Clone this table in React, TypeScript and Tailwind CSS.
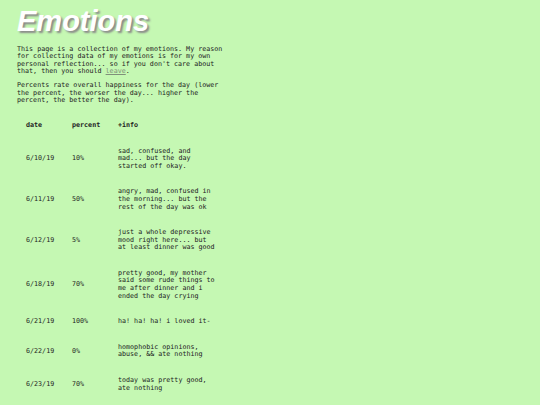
import React from 'react';

const rows = [
  { date: '6/10/19', pct: '10%', info: 'sad, confused, and mad... but the day started off okay.' },
  { date: '6/11/19', pct: '50%', info: 'angry, mad, confused in the morning... but the rest of the day was ok' },
  { date: '6/12/19', pct: '5%', info: 'just a whole depressive mood right here... but at least dinner was good' },
  { date: '6/18/19', pct: '70%', info: 'pretty good, my mother said some rude things to me after dinner and i ended the day crying' },
  { date: '6/21/19', pct: '100%', info: 'ha! ha! ha! i loved it-' },
  { date: '6/22/19', pct: '0%', info: 'homophobic opinions, abuse, && ate nothing' },
  { date: '6/23/19', pct: '70%', info: 'today was pretty good, ate nothing' },
];

const App: React.FC = () => {
  return (
    <div className="min-h-[405px] bg-[#c5f8b3] pl-[17px] pt-[6.5px] text-[#222] font-['DejaVu_Sans_Mono',monospace] text-[6.7px] leading-[7.6px]">
      <h1 className="font-['Liberation_Sans',Arial,sans-serif] text-[29px] leading-[29px] font-bold italic text-white [text-shadow:2px_2px_2px_#8a8a8a]">
        Emotions
      </h1>

      <p className="mt-[10px] w-[210px]">
        This page is a collection of my emotions. My reason for collecting data of my emotions is for my own personal reflection... so if you don't care about that, then you should{' '}
        <a href="#" className="text-[#7f907a] underline">leave</a>.
      </p>
      <p className="mt-[6.3px] w-[210px]">
        Percents rate overall happiness for the day (lower the percent, the worser the day... higher the percent, the better the day).
      </p>

      <div className="mt-[17px] ml-[9px] grid grid-cols-[46px_46px_98px] items-center gap-y-[18px]">
        <div className="font-bold">date</div>
        <div className="font-bold">percent</div>
        <div className="font-bold">+info</div>
        {rows.map((r, i) => (
          <React.Fragment key={i}>
            <div>{r.date}</div>
            <div>{r.pct}</div>
            <div>{r.info}</div>
          </React.Fragment>
        ))}
      </div>
    </div>
  );
};

export default App;
